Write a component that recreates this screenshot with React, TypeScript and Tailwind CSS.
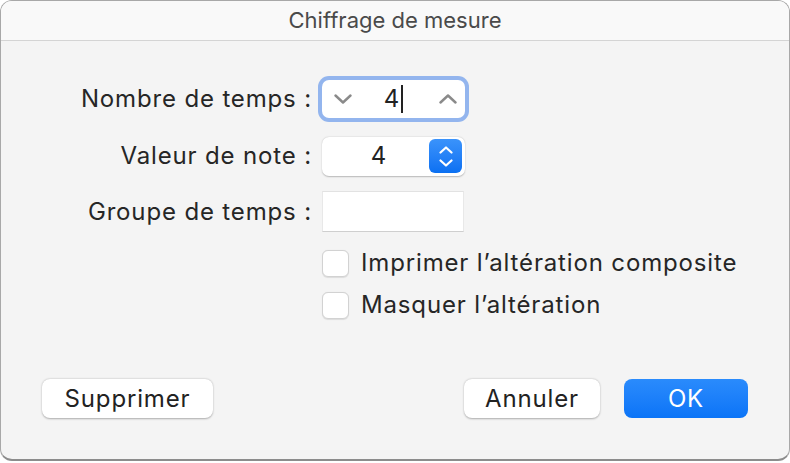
import React from "react";

const font = { fontFamily: "Inter, 'Liberation Sans', sans-serif" };

function Chevron({ dir, color, w = 16, h = 9, sw = 2.4 }: { dir: "up" | "down"; color: string; w?: number; h?: number; sw?: number }) {
  const d = dir === "down" ? `M1.5 1.5 L${w / 2} ${h - 1.5} L${w - 1.5} 1.5` : `M1.5 ${h - 1.5} L${w / 2} 1.5 L${w - 1.5} ${h - 1.5}`;
  return (
    <svg width={w} height={h} viewBox={`0 0 ${w} ${h}`} fill="none">
      <path d={d} stroke={color} strokeWidth={sw} strokeLinecap="round" strokeLinejoin="round" />
    </svg>
  );
}

export default function App() {
  return (
    <div className="w-[790px] h-[463px] bg-white" style={font}>
      <div className="w-[790px] h-[461px] rounded-[12px] border border-[#a8a8a8] border-b-[2px] border-b-[#8c8c8c] bg-[#f4f4f4] overflow-hidden flex flex-col">
        <div className="h-[40px] shrink-0 bg-[#f9f9f9] border-b border-[#d4d4d4] flex items-center justify-center text-[22px] text-[#4a4a4a]">
          Chiffrage de mesure
        </div>
        <div className="flex flex-col pt-[35px]">
          {/* Row 1 */}
          <div className="flex items-center h-[46px]">
            <div className="w-[312px] text-right text-[24px] tracking-[0.85px] text-[#262626] pr-[1px]">Nombre de temps :</div>
            <div className="ml-[5px] w-[151px] h-[46px] rounded-[11px] bg-[#93b5ee] p-[4px]">
              <div className="w-full h-full rounded-[7px] bg-white flex items-center pl-[12px] pr-[8px]">
                <Chevron dir="down" color="#8a8a8a" w={18} h={10} />
                <div className="flex-1 flex items-center justify-center pr-[4px]">
                  <span className="text-[24px] text-[#222]">4</span>
                  <span className="w-[2px] h-[28px] bg-[#222] ml-[2px]" />
                </div>
                <Chevron dir="up" color="#8a8a8a" w={18} h={10} />
              </div>
            </div>
          </div>
          {/* Row 2 */}
          <div className="flex items-center h-[40px] mt-[14px]">
            <div className="w-[312px] text-right text-[24px] tracking-[0.85px] text-[#262626] pr-[1px]">Valeur de note :</div>
            <div className="ml-[9px] w-[143px] h-[39px] rounded-[7px] bg-white shadow-[0_0.5px_1.5px_rgba(0,0,0,0.25)] flex items-center pr-[3px]">
              <div className="flex-1 text-center text-[24px] text-[#222] pl-[6px]">4</div>
              <div className="w-[33px] h-[34px] rounded-[6px] bg-gradient-to-b from-[#3a93fb] to-[#0a70f2] flex flex-col items-center justify-center gap-[5px]">
                <Chevron dir="up" color="#ffffff" w={14} h={8} sw={2.2} />
                <Chevron dir="down" color="#ffffff" w={14} h={8} sw={2.2} />
              </div>
            </div>
          </div>
          {/* Row 3 */}
          <div className="flex items-center h-[41px] mt-[15px]">
            <div className="w-[312px] text-right text-[24px] tracking-[0.85px] text-[#262626] pr-[1px]">Groupe de temps :</div>
            <div className="ml-[9px] w-[142px] h-[41px] bg-white border-t border-[#e2e2e2] border-b border-b-[#cfcfcf] border-x border-x-[#e8e8e8]" />
          </div>
          {/* Checkboxes */}
          <div className="flex items-center h-[28px] mt-[17px] pl-[321px]">
            <div className="w-[27px] h-[27px] rounded-[6px] bg-white border border-[#d2d2d2] shadow-[0_0.5px_1px_rgba(0,0,0,0.1)]" />
            <span className="ml-[12px] text-[24px] tracking-[0.85px] text-[#262626]">Imprimer l’altération composite</span>
          </div>
          <div className="flex items-center h-[28px] mt-[14px] pl-[321px]">
            <div className="w-[27px] h-[27px] rounded-[6px] bg-white border border-[#d2d2d2] shadow-[0_0.5px_1px_rgba(0,0,0,0.1)]" />
            <span className="ml-[12px] text-[24px] tracking-[0.85px] text-[#262626]">Masquer l’altération</span>
          </div>
          {/* Buttons */}
          <div className="flex items-center mt-[60px] pl-[41px] pr-[41px]">
            <div className="w-[171px] h-[39px] rounded-[8px] bg-white shadow-[0_0.5px_2px_rgba(0,0,0,0.3)] flex items-center justify-center text-[24px] tracking-[0.85px] text-[#222]">
              Supprimer
            </div>
            <div className="flex-1" />
            <div className="w-[136px] h-[39px] rounded-[8px] bg-white shadow-[0_0.5px_2px_rgba(0,0,0,0.3)] flex items-center justify-center text-[24px] tracking-[0.85px] text-[#222]">
              Annuler
            </div>
            <div className="ml-[24px] w-[124px] h-[39px] rounded-[8px] bg-gradient-to-b from-[#2a8bfc] to-[#0a74f7] flex items-center justify-center text-[24px] tracking-[0.85px] text-white">
              OK
            </div>
          </div>
        </div>
      </div>
    </div>
  );
}
